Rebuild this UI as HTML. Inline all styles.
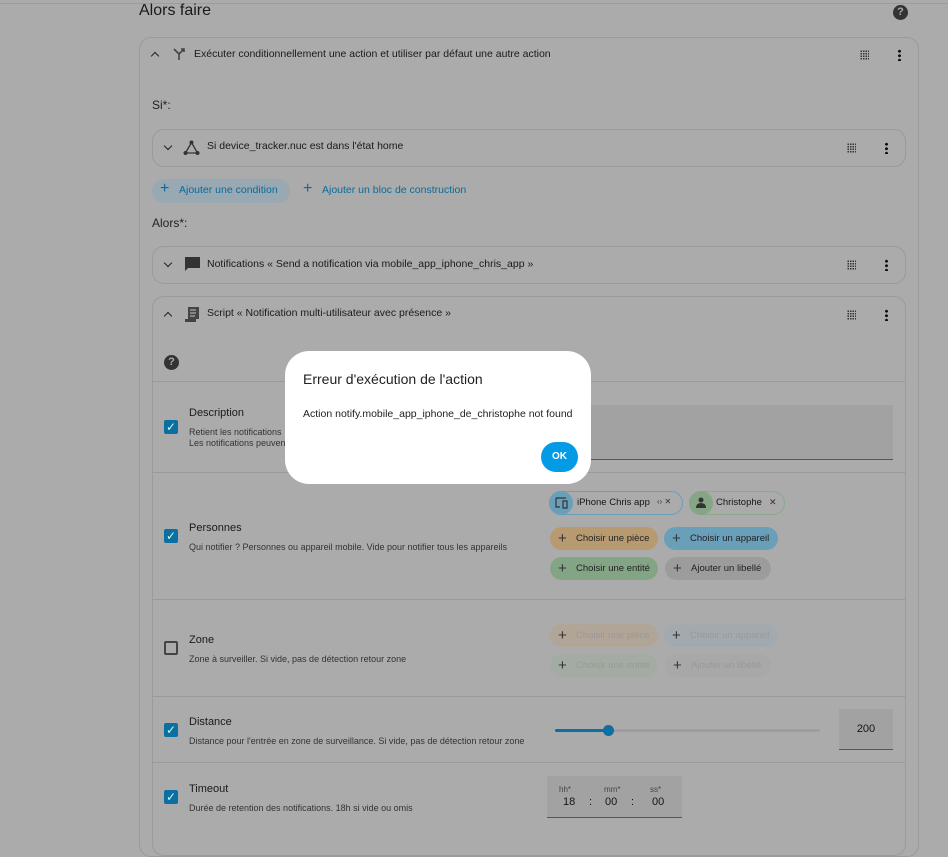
<!DOCTYPE html>
<html><head><meta charset="utf-8"><style>
*{box-sizing:border-box;margin:0;padding:0}
body{width:948px;height:827px;overflow:hidden;background:#ababab;font-family:"Liberation Sans",sans-serif;color:#151515;position:relative;font-size:11px}
.a{position:absolute}
.card{position:absolute;border:1px solid #9a9a9a;border-radius:12px}
.hr{position:absolute;left:153px;width:752px;height:1px;background:#9a9a9a}
.drag{position:absolute;width:9px;height:10px;background-image:radial-gradient(circle,#333 0.8px,transparent 1px);background-size:2.5px 2.5px}
.dots{position:absolute;width:3px;height:12px;background-image:radial-gradient(circle,#111 1.4px,transparent 1.6px);background-size:3px 4.5px}
.chev{position:absolute;width:6px;height:6px;border-right:1.8px solid #222;border-bottom:1.8px solid #222}
.cb{position:absolute;width:14px;height:14px;background:#0b6fa2;border-radius:2px;color:#cfe;font-size:12px;line-height:14px;text-align:center}
.cbo{position:absolute;width:14px;height:14px;border:2px solid #444;border-radius:2px}
.t{position:absolute;font-size:11px;color:#1a1a1a}
.s{position:absolute;font-size:9px;color:#333}
.chip{position:absolute;height:23px;border-radius:12px;font-size:9.5px;line-height:23px;padding-left:26px;color:#222}
.chip:before{content:"+";position:absolute;left:8px;top:0;font-size:15px;color:#333}
</style></head><body>
<div class="a" style="left:0;top:3px;width:948px;height:1px;background:#9c9c9c"></div>
<div class="a" style="left:139px;top:2px;font-size:16px;color:#1a1a1a">Alors faire</div>
<div class="a" style="left:893px;top:5px;width:15px;height:15px;border-radius:50%;background:#333;color:#aaa;font-size:11px;font-weight:bold;text-align:center;line-height:15px">?</div>

<div class="card" style="left:139px;top:37px;width:780px;height:820px"></div>
<div class="chev" style="left:152px;top:53px;transform:rotate(-135deg)"></div>
<svg class="a" style="left:172px;top:47px" width="14" height="14"><path d="M2 2L7 7V13M12 2L7 7M9 2H12V5" fill="none" stroke="#444" stroke-width="1.6"/></svg>
<div class="t" style="left:194px;top:48px;font-size:10.5px">Exécuter conditionnellement une action et utiliser par défaut une autre action</div>
<div class="drag" style="left:860px;top:50px"></div><div class="dots" style="left:898px;top:49px"></div>

<div class="a" style="left:152px;top:98px;font-size:12px;color:#222">Si*:</div>
<div class="card" style="left:152px;top:129px;width:754px;height:38px"></div>
<div class="chev" style="left:165px;top:143px;transform:rotate(45deg)"></div>
<svg class="a" style="left:183px;top:140px" width="17" height="16"><circle cx="8.5" cy="2.5" r="2" fill="#333"/><circle cx="2.5" cy="13" r="2" fill="#333"/><circle cx="14.5" cy="13" r="2" fill="#333"/><path d="M8.5 2.5L2.5 13H14.5Z" fill="none" stroke="#333" stroke-width="1.3"/></svg>
<div class="t" style="left:207px;top:140px;font-size:10.5px">Si device_tracker.nuc est dans l'état home</div>
<div class="drag" style="left:847px;top:143px"></div><div class="dots" style="left:885px;top:142px"></div>

<div class="a" style="left:152px;top:179px;width:138px;height:24px;border-radius:12px;background:#98a9b3"></div>
<div class="a" style="left:160px;top:180px;font-size:16px;color:#0a6a9a">+</div>
<div class="a" style="left:179px;top:184px;font-size:10.5px;color:#0a6a9a">Ajouter une condition</div>
<div class="a" style="left:303px;top:180px;font-size:16px;color:#0a6a9a">+</div>
<div class="a" style="left:322px;top:184px;font-size:10.5px;color:#0a6a9a">Ajouter un bloc de construction</div>

<div class="a" style="left:152px;top:216px;font-size:12px;color:#222">Alors*:</div>
<div class="card" style="left:152px;top:246px;width:754px;height:38px"></div>
<div class="chev" style="left:165px;top:260px;transform:rotate(45deg)"></div>
<svg class="a" style="left:184px;top:256px" width="17" height="16"><path d="M1 1H16V12H4L1 15Z" fill="#333"/></svg>
<div class="t" style="left:207px;top:258px;font-size:10.5px">Notifications « Send a notification via mobile_app_iphone_chris_app »</div>
<div class="drag" style="left:847px;top:260px"></div><div class="dots" style="left:885px;top:259px"></div>

<div class="card" style="left:152px;top:296px;width:754px;height:560px"></div>
<div class="chev" style="left:165px;top:313px;transform:rotate(-135deg)"></div>
<svg class="a" style="left:184px;top:305px" width="17" height="18"><path d="M4 2H15V14H4Z" fill="#444"/><path d="M6 5H12M6 8H12M6 11H11" stroke="#aaa" stroke-width="1.2"/><path d="M1 14H12V17H1Z" fill="#444"/></svg>
<div class="t" style="left:207px;top:307px;font-size:10.5px">Script « Notification multi-utilisateur avec présence »</div>
<div class="drag" style="left:847px;top:310px"></div><div class="dots" style="left:885px;top:309px"></div>
<div class="a" style="left:164px;top:355px;width:15px;height:15px;border-radius:50%;background:#333;color:#aaa;font-size:11px;font-weight:bold;text-align:center;line-height:15px">?</div>

<div class="hr" style="top:381px"></div>
<div class="cb" style="left:164px;top:420px">✓</div>
<div class="t" style="left:189px;top:407px">Description</div>
<div class="s" style="left:189px;top:427px">Retient les notifications</div>
<div class="s" style="left:189px;top:438px">Les notifications peuven</div>
<div class="a" style="left:560px;top:405px;width:333px;height:55px;background:#a2a2a2;border-bottom:1px solid #555"></div>

<div class="hr" style="top:472px"></div>
<div class="cb" style="left:164px;top:529px">✓</div>
<div class="t" style="left:189px;top:522px">Personnes</div>
<div class="s" style="left:189px;top:542px">Qui notifier ? Personnes ou appareil mobile. Vide pour notifier tous les appareils</div>
<div class="a" style="left:549px;top:491px;width:134px;height:24px;border:1px solid #6a9fba;border-radius:12px"></div>
<div class="a" style="left:549px;top:491px;width:24px;height:24px;border-radius:50%;background:#6a9fba"></div>
<svg class="a" style="left:554px;top:497px" width="14" height="12"><path d="M2 1H12M2 1V10H6M9 4H13V11H9Z" fill="none" stroke="#333" stroke-width="1.2"/></svg>
<div class="a" style="left:577px;top:497px;font-size:9.5px">iPhone Chris app</div>
<div class="a" style="left:657px;top:497px;font-size:8px;color:#333">‹› ✕</div>
<div class="a" style="left:689px;top:491px;width:96px;height:24px;border:1px solid #8aaa8a;border-radius:12px"></div>
<div class="a" style="left:689px;top:491px;width:24px;height:24px;border-radius:50%;background:#86a586"></div>
<svg class="a" style="left:696px;top:497px" width="10" height="11"><circle cx="5" cy="3" r="2.5" fill="#333"/><path d="M0 11Q0 6 5 6Q10 6 10 11Z" fill="#333"/></svg>
<div class="a" style="left:716px;top:497px;font-size:9.5px">Christophe</div>
<div class="a" style="left:769px;top:497px;font-size:9px;color:#333">✕</div>
<div class="chip" style="left:550px;top:527px;width:108px;background:#b89a70">Choisir une pièce</div>
<div class="chip" style="left:664px;top:527px;width:114px;background:#6a9fba">Choisir un appareil</div>
<div class="chip" style="left:550px;top:557px;width:108px;background:#84a585">Choisir une entité</div>
<div class="chip" style="left:665px;top:557px;width:106px;background:#9c9c9c">Ajouter un libellé</div>

<div class="hr" style="top:599px"></div>
<div class="cbo" style="left:164px;top:641px"></div>
<div class="t" style="left:189px;top:634px">Zone</div>
<div class="s" style="left:189px;top:654px">Zone à surveiller. Si vide, pas de détection retour zone</div>
<div class="chip" style="left:550px;top:624px;width:108px;background:#b0a596;color:#999">Choisir une pièce</div>
<div class="chip" style="left:664px;top:624px;width:114px;background:#a2aab0;color:#999">Choisir un appareil</div>
<div class="chip" style="left:550px;top:654px;width:108px;background:#a3aca3;color:#999">Choisir une entité</div>
<div class="chip" style="left:665px;top:654px;width:106px;background:#a8a8a8;color:#999">Ajouter un libellé</div>

<div class="hr" style="top:696px"></div>
<div class="cb" style="left:164px;top:723px">✓</div>
<div class="t" style="left:189px;top:716px">Distance</div>
<div class="s" style="left:189px;top:736px">Distance pour l'entrée en zone de surveillance. Si vide, pas de détection retour zone</div>
<div class="a" style="left:555px;top:729px;width:265px;height:3px;background:#9f9aa3;border-radius:2px"></div>
<div class="a" style="left:555px;top:729px;width:54px;height:3px;background:#0b6fa2;border-radius:2px"></div>
<div class="a" style="left:603px;top:725px;width:11px;height:11px;border-radius:50%;background:#0b6fa2"></div>
<div class="a" style="left:839px;top:709px;width:54px;height:41px;background:#a2a2a2;border-bottom:1px solid #555;font-size:11px;text-align:center;line-height:41px">200</div>

<div class="hr" style="top:762px"></div>
<div class="cb" style="left:164px;top:790px">✓</div>
<div class="t" style="left:189px;top:783px">Timeout</div>
<div class="s" style="left:189px;top:803px">Durée de retention des notifications. 18h si vide ou omis</div>
<div class="a" style="left:547px;top:776px;width:135px;height:42px;background:#a2a2a2;border-bottom:1px solid #555"></div>
<div class="a" style="left:559px;top:785px;font-size:8px;color:#444">hh*</div>
<div class="a" style="left:604px;top:785px;font-size:8px;color:#444">mm*</div>
<div class="a" style="left:650px;top:785px;font-size:8px;color:#444">ss*</div>
<div class="a" style="left:563px;top:796px;font-size:11px">18</div>
<div class="a" style="left:589px;top:796px;font-size:11px">:</div>
<div class="a" style="left:605px;top:796px;font-size:11px">00</div>
<div class="a" style="left:631px;top:796px;font-size:11px">:</div>
<div class="a" style="left:652px;top:796px;font-size:11px">00</div>

<div class="a" style="left:285px;top:351px;width:306px;height:133px;background:#fff;border-radius:24px"></div>
<div class="a" style="left:303px;top:371px;font-size:14px;color:#212121">Erreur d'exécution de l'action</div>
<div class="a" style="left:303px;top:408px;font-size:10.5px;color:#212121">Action notify.mobile_app_iphone_de_christophe not found</div>
<div class="a" style="left:541px;top:442px;width:37px;height:30px;border-radius:15px;background:#039be5;color:#fff;font-size:10px;font-weight:bold;text-align:center;line-height:30px">OK</div>
</body></html>
